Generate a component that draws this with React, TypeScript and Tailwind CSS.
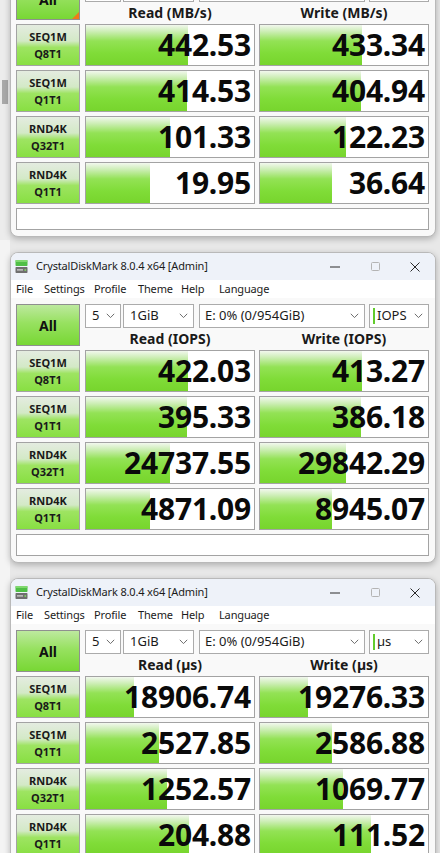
import React from "react";

type Cell = { v: string; f: number };
type RowData = { l1: string; l2: string; r: Cell; w: Cell };
type Win = { unit: string; mode: string; orange?: boolean; rows: RowData[] };

const FILL =
  "bg-[linear-gradient(to_bottom,#f2f8ee_0%,#cdeeb6_16%,#93e255_40%,#80dc38_70%,#77d52d_100%)]";
const LABEL =
  "bg-[linear-gradient(to_bottom,#e4ece0_0%,#d3e9c6_40%,#9ee462_56%,#88df42_100%)]";
const ALL =
  "bg-[linear-gradient(to_bottom,#bde99f_0%,#97e160_45%,#78d734_100%)]";

function Chevron() {
  return (
    <svg width="9" height="6" viewBox="0 0 9 6" className="shrink-0">
      <polyline points="0.8,0.8 4.5,4.6 8.2,0.8" fill="none" stroke="#6e6e6e" strokeWidth="1" />
    </svg>
  );
}

function AppIcon() {
  return (
    <svg width="13" height="15" viewBox="0 0 13 15">
      <rect x="0.5" y="1" width="12" height="6" rx="0.8" fill="#4fbf46" />
      <rect x="0.5" y="1" width="12" height="2" rx="0.8" fill="#7fd86f" />
      <rect x="0.5" y="8" width="12" height="6" rx="0.8" fill="#6f6f6f" />
      <rect x="2" y="10.3" width="6" height="1.2" fill="#d8d8d8" />
      <rect x="9.5" y="10.2" width="1.6" height="1.6" fill="#7fe060" />
    </svg>
  );
}

function TitleBar() {
  return (
    <div className="h-[27px] bg-[#eef2f9] flex items-center">
      <div className="pl-[4px] pr-[8px] flex items-center">
        <AppIcon />
      </div>
      <span className="text-[11px] tracking-[-0.15px] text-[#1b1b1b]">CrystalDiskMark 8.0.4 x64 [Admin]</span>
      <div className="ml-auto flex h-full">
        <div className="w-[40px] h-full flex items-center justify-center">
          <svg width="10" height="2" viewBox="0 0 10 2">
            <line x1="0" y1="1" x2="10" y2="1" stroke="#2a2a2a" strokeWidth="1" />
          </svg>
        </div>
        <div className="w-[40px] h-full flex items-center justify-center">
          <svg width="9" height="9" viewBox="0 0 9 9">
            <rect x="0.5" y="0.5" width="8" height="8" rx="1" fill="none" stroke="#b4b4b4" strokeWidth="1" />
          </svg>
        </div>
        <div className="w-[40px] h-full flex items-center justify-center">
          <svg width="10" height="10" viewBox="0 0 10 10">
            <path d="M0.5 0.5 L9.5 9.5 M9.5 0.5 L0.5 9.5" stroke="#2a2a2a" strokeWidth="1" />
          </svg>
        </div>
      </div>
    </div>
  );
}

function MenuBar() {
  return (
    <div className="h-[18px] bg-white flex items-center pl-[5px] text-[11px] tracking-[-0.15px] text-[#1b1b1b]">
      <span className="w-[28px]">File</span>
      <span className="w-[50px]">Settings</span>
      <span className="w-[44px]">Profile</span>
      <span className="w-[43px]">Theme</span>
      <span className="w-[38px]">Help</span>
      <span>Language</span>
    </div>
  );
}

function Bar({ c }: { c: Cell }) {
  return (
    <div className="relative w-[170px] h-[42px] bg-white border border-[#a3a3a3] overflow-hidden">
      <div className={`h-full ${FILL}`} style={{ width: c.f }} />
      <div className="absolute inset-0 flex items-center justify-end pr-[3px] text-[30px] font-bold text-[#0a0a0a] leading-none tracking-[-0.2px]">
        {c.v}
      </div>
    </div>
  );
}

function Label({ l1, l2 }: { l1: string; l2: string }) {
  return (
    <div className={`w-[64px] h-[42px] border border-[#a3a3a3] ${LABEL} flex flex-col items-center justify-center text-[11px] font-bold leading-[17px] text-[#1a1a1a]`}>
      <span>{l1}</span>
      <span>{l2}</span>
    </div>
  );
}

function Window({ w }: { w: Win }) {
  return (
    <div className="w-[426px] h-[311px] shrink-0 border border-[#b9b9b9] rounded-[8px] overflow-hidden bg-[#f9f9f9] shadow-[0_2px_6px_rgba(0,0,0,0.25)] flex flex-col">
      <TitleBar />
      <MenuBar />
      <div className="flex flex-col gap-[4px] pl-[5px] pt-[6px]">
        <div className="flex gap-[5px]">
          <div className={`relative w-[64px] h-[42px] border border-[#8f8f8f] ${ALL} flex items-center justify-center text-[14px] font-bold text-[#111]`}>
            All
            {w.orange && (
              <div className="absolute right-0 bottom-0 w-0 h-0 border-l-[7px] border-l-transparent border-b-[7px] border-b-[#f07a1a]" />
            )}
          </div>
          <div className="w-[344px] flex flex-col">
            <div className="h-[24px] flex text-[13px] text-[#1b1b1b]">
              <div className="w-[36px] h-[24px] bg-white border border-[#ababab] flex items-center pl-[6px] pr-[5px]">
                <span className="flex-1">5</span>
                <Chevron />
              </div>
              <div className="w-[71px] h-[24px] ml-[2px] bg-white border border-[#ababab] flex items-center pl-[6px] pr-[5px]">
                <span className="flex-1">1GiB</span>
                <Chevron />
              </div>
              <div className="w-[166px] h-[24px] ml-[5px] bg-white border border-[#ababab] flex items-center pl-[5px] pr-[5px]">
                <span className="flex-1">E: 0% (0/954GiB)</span>
                <Chevron />
              </div>
              <div className="w-[60px] h-[24px] ml-[4px] bg-white border border-[#ababab] flex items-center pl-[3px] pr-[5px]">
                <span className="w-[2px] h-[16px] bg-[#62cc2c] mr-[2px]" />
                <span className="flex-1">{w.mode}</span>
                <Chevron />
              </div>
            </div>
            <div className="flex gap-[4px] pt-[3px] text-[14px] font-bold leading-[15px] text-[#1a1a1a]">
              <div className="w-[170px] text-center">Read ({w.unit})</div>
              <div className="w-[170px] text-center">Write ({w.unit})</div>
            </div>
          </div>
        </div>
        {w.rows.map((r, i) => (
          <div key={i} className="flex">
            <Label l1={r.l1} l2={r.l2} />
            <div className="ml-[5px]">
              <Bar c={r.r} />
            </div>
            <div className="ml-[4px]">
              <Bar c={r.w} />
            </div>
          </div>
        ))}
        <div className="w-[413px] h-[22px] bg-white border border-[#a3a3a3]" />
      </div>
    </div>
  );
}

const wins: Win[] = [
  {
    unit: "MB/s",
    mode: "MB/s",
    orange: true,
    rows: [
      { l1: "SEQ1M", l2: "Q8T1", r: { v: "442.53", f: 102 }, w: { v: "433.34", f: 102 } },
      { l1: "SEQ1M", l2: "Q1T1", r: { v: "414.53", f: 101 }, w: { v: "404.94", f: 101 } },
      { l1: "RND4K", l2: "Q32T1", r: { v: "101.33", f: 84 }, w: { v: "122.23", f: 86 } },
      { l1: "RND4K", l2: "Q1T1", r: { v: "19.95", f: 64 }, w: { v: "36.64", f: 72 } },
    ],
  },
  {
    unit: "IOPS",
    mode: "IOPS",
    rows: [
      { l1: "SEQ1M", l2: "Q8T1", r: { v: "422.03", f: 102 }, w: { v: "413.27", f: 102 } },
      { l1: "SEQ1M", l2: "Q1T1", r: { v: "395.33", f: 101 }, w: { v: "386.18", f: 101 } },
      { l1: "RND4K", l2: "Q32T1", r: { v: "24737.55", f: 84 }, w: { v: "29842.29", f: 86 } },
      { l1: "RND4K", l2: "Q1T1", r: { v: "4871.09", f: 64 }, w: { v: "8945.07", f: 72 } },
    ],
  },
  {
    unit: "µs",
    mode: "µs",
    rows: [
      { l1: "SEQ1M", l2: "Q8T1", r: { v: "18906.74", f: 48 }, w: { v: "19276.33", f: 48 } },
      { l1: "SEQ1M", l2: "Q1T1", r: { v: "2527.85", f: 73 }, w: { v: "2586.88", f: 72 } },
      { l1: "RND4K", l2: "Q32T1", r: { v: "1252.57", f: 81 }, w: { v: "1069.77", f: 83 } },
      { l1: "RND4K", l2: "Q1T1", r: { v: "204.88", f: 103 }, w: { v: "111.52", f: 111 } },
    ],
  },
];

export default function App() {
  return (
    <div className="w-[440px] h-[853px] overflow-hidden bg-[#e8e8e8] flex [font-family:'Noto_Sans',sans-serif]">
      <div className="w-[10px] shrink-0 flex flex-col">
        <div className="h-[240px] bg-[#ececec] flex flex-col items-start">
          <div className="mt-[80px] ml-[2px] w-[6px] h-[24px] bg-[#a9a9a9]" />
        </div>
        <div className="h-[613px] bg-[#f4f4f4]" />
      </div>
      <div className="flex flex-col gap-[15px] mt-[-74px]">
        {wins.map((w, i) => (
          <Window key={i} w={w} />
        ))}
      </div>
    </div>
  );
}
